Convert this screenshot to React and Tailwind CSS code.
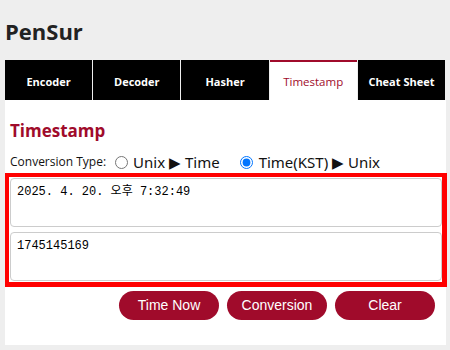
import { useState } from 'react';

const tabs = ['Encoder', 'Decoder', 'Hasher', 'Timestamp', 'Cheat Sheet'];

export default function App() {
  const [mode, setMode] = useState('kst');

  return (
    <div className="w-[450px] h-[350px] bg-[#eeeeee] px-[5px] font-['Open_Sans',sans-serif] text-[#222]">
      <h1 className="pt-[16px] pb-[14px] text-[22px] leading-[30px] font-bold text-[#222]">PenSur</h1>

      <div className="flex gap-px w-[440px] h-[40px]">
        {tabs.map((t) =>
          t === 'Timestamp' ? (
            <div key={t} className="flex-1 flex items-center justify-center pt-[2px] bg-white border-t-2 border-[#a00b2b] text-[11.5px] text-[#a00b2b]">
              {t}
            </div>
          ) : (
            <div key={t} className="flex-1 flex items-center justify-center pt-[4px] bg-black text-[11px] font-bold text-white">
              {t}
            </div>
          )
        )}
      </div>

      <div className="w-[441px] h-[245px] bg-white">
        <h2 className="pt-[20px] pl-[5px] text-[17px] leading-[22px] font-bold text-[#a00b2b]">Timestamp</h2>

        <div className="mt-[11px] pl-[5px] h-[18px] flex items-center text-[#111]">
          <span className="text-[12px] mr-[9px]">Conversion Type:</span>
          <label className="flex items-center text-[15px] font-['Noto_Sans',sans-serif]">
            <input
              type="radio"
              name="mode"
              checked={mode === 'unix'}
              onChange={() => setMode('unix')}
              className="m-0 mr-[5px] w-[13px] h-[13px]"
            />
            Unix ▶ Time
          </label>
          <label className="flex items-center ml-[20px] text-[15px] font-['Noto_Sans',sans-serif]">
            <input
              type="radio"
              name="mode"
              checked={mode === 'kst'}
              onChange={() => setMode('kst')}
              className="m-0 mr-[6px] w-[13px] h-[13px]"
            />
            Time(KST) ▶ Unix
          </label>
        </div>

        <div className="mt-[2px] w-[442px] border-[#ff0000] border-l-4 border-t-4 border-r-[5px] border-b-[5px] pl-px pt-px pb-px flex flex-col gap-[5px]">
          <textarea
            className="block w-full h-[49px] resize-none border border-[#cccccc] rounded-[4px] px-[6px] py-[5px] text-[12px] leading-[16px] font-['Liberation_Mono','Noto_Sans_CJK_KR',monospace] text-black outline-none"
            defaultValue="2025. 4. 20. 오후 7:32:49"
          />
          <textarea
            className="block w-full h-[49px] resize-none border border-[#cccccc] rounded-[4px] px-[6px] py-[5px] text-[12px] leading-[16px] font-['Liberation_Mono','Noto_Sans_CJK_KR',monospace] text-black outline-none"
            defaultValue="1745145169"
          />
        </div>

        <div className="mt-[4px] mr-[11px] flex justify-end gap-[8px]">
          {['Time Now', 'Conversion', 'Clear'].map((b) => (
            <button
              key={b}
              className="w-[100px] h-[29px] rounded-full bg-[#a00b2b] text-white text-[14px] font-['Liberation_Sans',Arial,sans-serif]"
            >
              {b}
            </button>
          ))}
        </div>
      </div>
    </div>
  );
}
